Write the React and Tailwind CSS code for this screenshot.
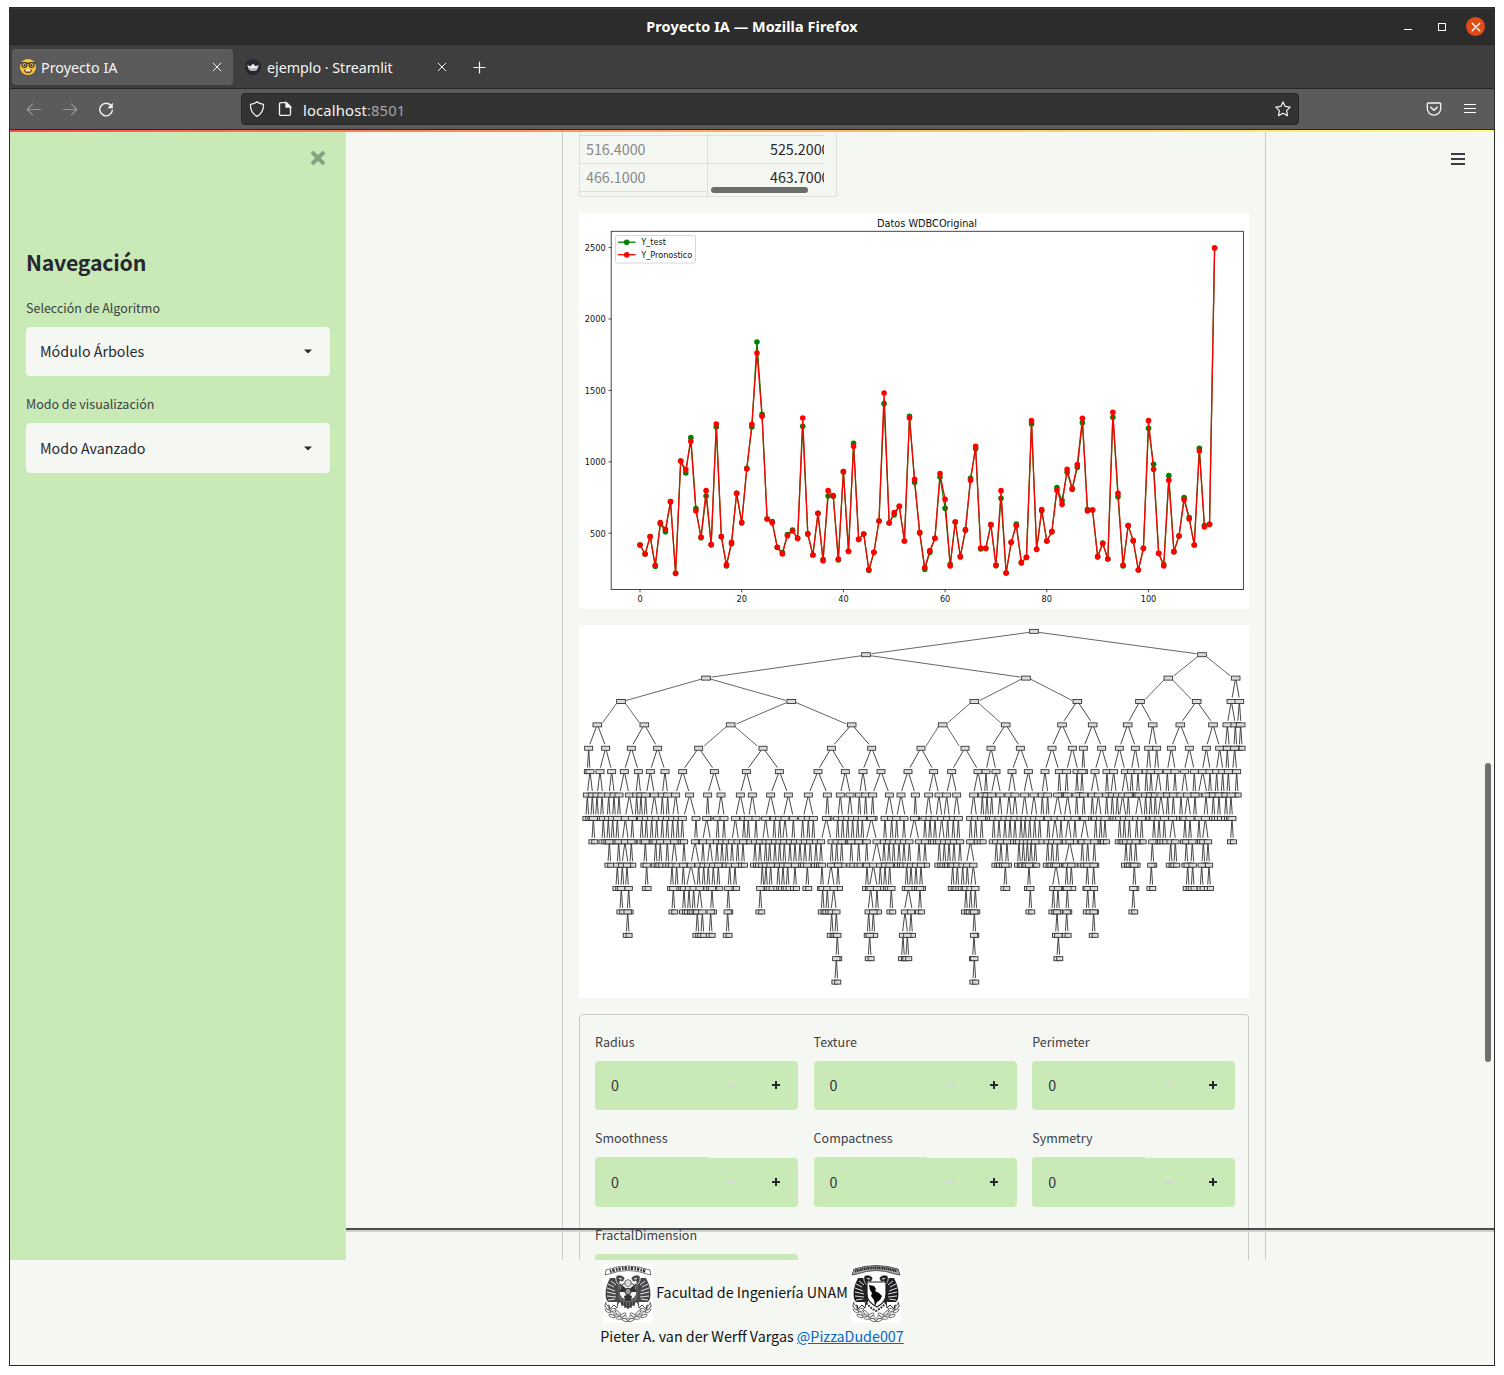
import React from "react";

const SANS = "font-['Noto_Sans_CJK_SC','Open_Sans',sans-serif]";
const CHROME = "font-['Noto_Sans','Open_Sans',sans-serif]";

/* ---------- line chart ---------- */
const predicted = [
  495, 522, 470, 556, 428, 448, 365, 580, 243, 269, 184, 393, 471, 332, 494, 132, 470, 554, 487, 340,
  428, 267, 133, -81, 109, 417, 428, 502, 522, 467, 453, 475, 114, 461, 525, 400, 542, 332, 347, 537,
  275, 514, 199, 478, 462, 569, 517, 423, 39, 429, 398, 379, 483, 114, 298, 458, 563, 512, 475, 281,
  358, 558, 426, 530, 449, 301, 199, 504, 505, 434, 555, 332, 579, 487, 437, 548, 532, 122, 508, 389,
  483, 455, 331, 373, 268, 326, 254, 115, 393, 390, 530, 491, 537, 97, 340, 555, 437, 482, 570, 505,
  122, 268, 520, 558, 301, 515, 468, 359, 417, 495, 213, 441, 433, -396,
];
const testDiffs = {
  3: 559, 4: 431, 5: 455, 9: 279, 10: 173, 11: 386, 12: 473, 13: 348, 15: 141, 17: 558, 18: 491, 22: 141,
  23: -114, 24: 103, 21: 265, 26: 425, 28: 518, 29: 464, 30: 450, 32: 139, 33: 463, 36: 539, 37: 348,
  38: 349, 39: 540, 42: 190, 45: 571, 48: 71, 50: 404, 53: 109, 54: 307, 56: 568, 57: 517, 59: 291,
  60: 385, 61: 553, 64: 451, 65: 295, 66: 206, 67: 507, 70: 557, 71: 355, 74: 432, 77: 132, 79: 392,
  82: 323, 83: 362, 84: 277, 85: 328, 86: 262, 87: 128, 88: 389, 91: 489, 93: 112, 94: 350, 95: 558,
  100: 145, 101: 253, 103: 554, 104: 287, 107: 353, 108: 413, 110: 205, 111: 437,
};
const actual = predicted.map((v, i) => (i in testDiffs ? testDiffs[i] : v));
const px = (i) => 640 + i * 5.085;
const py = (v) => 380 + v / 3;

function Series({ values, color }) {
  return (
    <g>
      <polyline points={values.map((v, i) => `${px(i)},${py(v)}`).join(" ")} fill="none" stroke={color} strokeWidth="1.25" strokeLinejoin="round" />
      {values.map((v, i) => (
        <circle key={i} cx={px(i)} cy={py(v)} r="2.8" fill={color} />
      ))}
    </g>
  );
}

function LineChart() {
  const font = { fontFamily: "DejaVu Sans, sans-serif" };
  return (
    <svg className="block h-[396px] w-[670px] bg-white" viewBox="579 213 670 396" style={font} fill="#111">
      <text x="927" y="226.600" fontSize="9.750" textAnchor="middle">Datos WDBCOriginal</text>
      <Series values={actual} color="#008000" />
      <Series values={predicted} color="#ff0000" />
      <rect x="611.200" y="231.300" width="632.200" height="358.200" fill="none" stroke="#333" strokeWidth="0.9" />
      {[2500, 2000, 1500, 1000, 500].map((t, i) => (
        <g key={t}>
          <path d={`M608.5 ${247.6 + i * 71.4}h2.8`} stroke="#222" strokeWidth="0.8" />
          <text x="605.7" y={250.9 + i * 71.4} fontSize="8.2" textAnchor="end">{t}</text>
        </g>
      ))}
      {[0, 20, 40, 60, 80, 100].map((t) => (
        <g key={t}>
          <path d={`M${px(t)} 589.5v2.8`} stroke="#222" strokeWidth="0.8" />
          <text x={px(t)} y="601.5" fontSize="8.2" textAnchor="middle">{t}</text>
        </g>
      ))}
      <rect x="615.5" y="235.5" width="80" height="27.5" rx="1.5" fill="#fff" fillOpacity="0.8" stroke="#d4d4d4" strokeWidth="0.9" />
      <path d="M618 242.2h17.5" stroke="#008000" strokeWidth="1.3" />
      <circle cx="626.7" cy="242.2" r="2.8" fill="#008000" />
      <path d="M618 254.7h17.5" stroke="#f00" strokeWidth="1.3" />
      <circle cx="626.7" cy="254.7" r="2.8" fill="#f00" />
      <text x="641.3" y="245.1" fontSize="8.1">Y_test</text>
      <text x="641.3" y="257.6" fontSize="8.1">Y_Pronostico</text>
    </svg>
  );
}

/* ---------- decision tree: per level, [x, spread] of each split node ---------- */
const splits = [
  [[1377, 504]],
  [[873, 480], [1881, 101]],
  [[393, 256], [1353, 155], [1780, 85], [1982, 12]],
  [[138, 71], [649, 181], [1198, 95], [1507, 46], [1695, 38], [1865, 49], [1969, 12], [1993, 5]],
  [[67, 26], [208, 39], [467, 96], [830, 60], [1103, 66], [1292, 44], [1461, 31], [1553, 27], [1658, 24], [1733, 12], [1816, 27], [1914, 20], [1957, 6], [1981], [1997]],
  [[41, 4], [92, 18], [169, 21], [248, 22], [371, 48], [564, 50], [769, 41], [890, 27], [1038, 38], [1170, 40], [1248, 15], [1336, 25], [1431, 21], [1492, 17], [1525, 4], [1580, 20], [1633, 17], [1681, 12], [1721, 6], [1745, 6], [1789, 12], [1843, 15], [1894, 12], [1934, 10], [1957], [1979, 6]],
  [[45, 8], [75, 8], [110, 8], [148, 14], [190, 7], [226, 12], [270, 8], [323, 21], [418, 20], [514, 18], [613, 26], [729, 28], [811, 15], [864, 10], [918, 25], [999, 22], [1076, 15], [1130, 15], [1209, 13], [1233], [1263, 14], [1311, 11], [1360, 14], [1410, 9], [1453], [1475], [1506, 4], [1521, 4], [1560, 12], [1596], [1616, 8], [1651, 10], [1670], [1689], [1714], [1728], [1750, 9], [1777], [1800], [1829, 9], [1858], [1883, 13], [1905], [1925], [1943], [1960], [1985]],
  [[37], [52], [66], [81], [101], [117], [132], [163, 12], [185], [198], [212], [238, 10], [262], [278], [302, 9], [344, 18], [398], [438, 10], [496, 14], [532, 11], [587, 15], [640, 15], [700, 15], [757, 5], [796, 7], [825, 7], [853], [872], [893], [943, 12], [978, 13], [1021, 4], [1061, 9], [1092, 9], [1115, 8], [1145, 9], [1196, 9], [1222], [1236], [1250], [1275, 6], [1302, 7], [1320, 7], [1349, 9], [1377, 9], [1402], [1418], [1448, 12], [1478, 10], [1505], [1526], [1552], [1570, 9], [1595], [1612], [1627], [1643, 10], [1660], [1692, 11], [1712], [1727], [1741], [1758, 9], [1778], [1795], [1818], [1838, 9], [1860], [1893, 6], [1915], [1932], [1953], [1968]],
  [[55], [85], [100], [113], [127], [151, 9], [172], [200], [214], [230], [245], [262], [277], [293], [308], [322], [363], [395, 12], [428], [447], [481, 10], [507], [520], [543], [572, 9], [598], [614], [630, 7], [655], [683], [700], [715], [754, 15], [788], [803], [818], [833], [848], [862], [889, 16], [930], [950], [965], [987], [1018, 14], [1050], [1065], [1080], [1100, 8], [1118], [1135], [1150], [1187], [1202], [1220], [1256], [1272], [1290], [1305], [1320], [1338], [1350], [1364], [1379], [1394], [1420], [1440, 9], [1458], [1480, 9], [1500], [1529, 12], [1562], [1577], [1590], [1634], [1648], [1663], [1685], [1700], [1737], [1752], [1768], [1793, 9], [1830], [1845], [1872], [1891, 9], [1971]],
  [[103], [131], [150, 9], [169], [211], [242], [256], [277], [298, 8], [327], [360, 12], [384], [405, 8], [426], [441], [455], [471], [488], [504], [540], [555], [572], [584], [600], [614], [628], [645], [660], [675], [690], [706], [723], [738], [770], [785], [800], [829], [851], [875], [905, 14], [927], [942], [956], [972], [987], [1003], [1032], [1050], [1093], [1108], [1122], [1137], [1155], [1186, 12], [1264], [1278], [1296], [1332], [1345], [1357], [1368], [1381], [1418], [1432], [1447], [1484, 14], [1522], [1538], [1558], [1653], [1667], [1682], [1732], [1787], [1801], [1834], [1852], [1885], [1899]],
  [[127], [142], [156], [215], [291], [305], [325], [348, 14], [371], [386], [400], [415], [430], [464], [480], [562], [573], [587], [610], [624], [638], [660], [697], [741], [768, 10], [789], [876], [895, 12], [916], [930], [944], [995], [1008], [1023], [1038], [1133], [1147], [1163], [1177], [1195, 8], [1291], [1362], [1443, 11], [1475], [1489], [1537], [1556], [1678], [1729], [1838], [1853], [1880], [1902]],
  [[139], [161], [295], [327], [342], [356], [374, 8], [411], [460], [556], [743], [757], [776, 8], [887, 8], [906], [949], [1000, 12], [1035], [1173], [1187], [1201], [1366], [1435], [1449], [1477], [1538], [1557], [1675]],
  [[158], [367], [382], [407], [458], [770], [784], [881], [895], [990, 8], [1008], [1198], [1446], [1475], [1556]],
  [[787], [884], [984], [997], [1197], [1450]],
  [[784], [1198]],
];
const levelY = (l) => 34 + 70.15 * l;

function TreeBox({ x, y, w }) {
  return (
    <g>
      <rect x={x - w / 2} y={y - 6} width={w} height="12" fill="#e2e2e2" stroke="#2c2c2c" strokeWidth="2.6" />
      <path d={`M${x - w / 2 + 4} ${y - 2}h${w - 8}M${x - w / 2 + 4} ${y + 2.5}h${w - 8}`} stroke="#b5b5b5" strokeWidth="1.2" strokeDasharray="2 1.2" />
    </g>
  );
}

function DecisionTree() {
  return (
    <svg className="block h-[373px] w-[670px] bg-white" viewBox="12 15 2010 1119">
      {splits.map((row, l) =>
        row.map(([x, s = 4.3]) =>
          [-1, 1].map((d) => {
            const k = s > 60 ? 15 / s : 0.12;
            return (
              <line key={`${l}-${x}-${d}`} x1={x + d * s * k * 0.9} y1={levelY(l) + (s > 150 ? 3 : 6)} x2={x + d * s * (1 - k * 1.1)} y2={levelY(l + 1) - (s > 150 ? 3 : s > 60 ? 7 : 12)} stroke={s > 60 ? "#555" : "#333"} strokeWidth="2.700" />
            );
          })
        )
      )}
      {splits.map((row, l) =>
        row.flatMap(([x, s = 4.3]) =>
          [-1, 1]
            .map((d) => x + d * s)
            .filter((c) => !(splits[l + 1] || []).some(([p]) => Math.abs(p - c) < 5))
            .map((c) => <TreeBox key={`${l}-${x}-${c}`} x={c} y={levelY(l + 1)} w={18} />)
        )
      )}
      {splits.map((row, l) => row.map(([x]) => <TreeBox key={`${l}-${x}`} x={x} y={levelY(l)} w={l < 5 ? 26 : l < 9 ? 24 : 22} />))}
    </svg>
  );
}

/* ---------- icons ---------- */
function NerdFace() {
  return (
    <svg className="size-4" viewBox="0 0 16 16">
      <circle cx="8" cy="8" r="8" fill="#fcc93b" />
      <path d="M.2 4.2 3 3.6 8 4.4l5-.8 2.8.6" fill="none" stroke="#3c3428" strokeWidth="1.1" />
      <circle cx="4.4" cy="6" r="2.5" fill="#c9b888" stroke="#3c3428" strokeWidth="1.1" />
      <circle cx="11.6" cy="6" r="2.5" fill="#c9b888" stroke="#3c3428" strokeWidth="1.1" />
      <circle cx="4.6" cy="6.2" r="1" fill="#3a2a16" />
      <circle cx="11.4" cy="6.2" r="1" fill="#3a2a16" />
      <path d="M3.6 10.4h8.8c-.4 2.6-2.2 3.9-4.4 3.9s-4-1.300-4.400-3.900z" fill="#7a4a1c" />
      <path d="M5.600 10.400h4.800v2H5.600z" fill="#fff" />
    </svg>
  );
}
function Crown() {
  return (
    <svg className="size-4" viewBox="0 0 16 16">
      <circle cx="8" cy="8" r="8" fill="#262730" />
      <path d="M2.200 6 5.400 7.300 8 4.700l2.600 2.600L13.800 6l-2 5q-3.800 1.400-7.600 0z" fill="#eee" />
      <path d="M3 8q5 2.300 10 0l-1.200 3q-3.800 1.400-7.600 0z" fill="#bbb" />
    </svg>
  );
}
function Stroke({ d, className, width = 1.2 }) {
  return (
    <svg className={className} viewBox="0 0 16 16" fill="none" stroke="currentColor" strokeWidth={width} strokeLinecap="round" strokeLinejoin="round">
      <path d={d} />
    </svg>
  );
}
const CLOSE = "M4.200 4.200l7.600 7.600M11.800 4.200l-7.600 7.600";

function Laurels() {
  return (
    <g fill="#fff" stroke="#555" strokeWidth="0.8">
      <path d="M4 43q8 10 20 9M46 43q-8 10-20 9M10 50q8 6 15 4M40 50q-8 6-15 4" fill="none" />
      {[[4, 43, 60], [5, 47, 30], [10, 46, -20], [9, 52, 20], [15, 49, 40], [16, 54, 5], [20, 51, -30], [22, 56, 20]].map(([x, y, a], i) => (
        <g key={i}>
          <ellipse cx={x} cy={y} rx="3.300" ry="1.300" transform={`rotate(${a} ${x} ${y})`} />
          <ellipse cx={50 - x} cy={y} rx="3.300" ry="1.300" transform={`rotate(${-a} ${50 - x} ${y})`} />
        </g>
      ))}
    </g>
  );
}
function Wing({ dark }) {
  return (
    <g>
      <path d="M7 14Q1 25 3 35l4 6q7 1 10-3l2-14q-2-8-7-10z" fill={dark} />
      <path d="M5 20l6 3M4 24l8 3M4 28l9 2M4 32l9 1M5 36l7-1M8 17l5 4" stroke="#f2f2f2" strokeWidth="0.900" />
      <path d="M13 12q5-3 9 2l-2 4-3-1-1 4q-4-3-3-9z" fill={dark} stroke="#fff" strokeWidth="0.700" />
      <path d="M16 14.500l3 .5" stroke="#fff" strokeWidth="1" />
      <path d="M3 38l-1 5 4-2 1 4 4-4 3 3 1-6" fill="#fff" stroke={dark} strokeWidth="1" />
    </g>
  );
}
function EngineeringCrest() {
  return (
    <svg className="h-[59px] w-[50px] bg-white" viewBox="0 0 50 59">
      <path d="M2 11 3 6Q25-2 47 6l1 5-4-1Q25 3 6 10z" fill="#fff" stroke="#555" strokeWidth="0.800" />
      <path d="M7 7.500Q25 1 43 7.500" fill="none" stroke="#333" strokeWidth="3.200" strokeDasharray="1.500 1 2.400 1.300" />
      <Wing dark="#48484c" />
      <g transform="matrix(-1 0 0 1 50 0)"><Wing dark="#48484c" /></g>
      <path d="M14 21h22l-1 13q-3 7-10 10-7-3-10-10z" fill="#666" stroke="#444" />
      <circle cx="25" cy="27.500" r="9" fill="#f2f2f2" stroke="#444" />
      <circle cx="25" cy="27.500" r="3.200" fill="#999" stroke="#333" />
      <path d="M19 21l4.500 4-1.500 3-6 0zM31 21l-4.500 4 1.500 3 6 0zM21 32l4-1.500 4 1.500-1 4.500h-6z" fill="#333" />
      <path d="M22 17q3-3 6 0v4l-3 2-3-2z" fill="#ddd" stroke="#444" strokeWidth=".7" />
      <path d="M19 37v5M22 38v6M25 38v7M28 38v6M31 37v5" stroke="#333" strokeWidth="1.300" />
      <Laurels />
    </svg>
  );
}
function UnamCrest() {
  return (
    <svg className="h-[59px] w-[50px] bg-white" viewBox="0 0 50 59">
      <path d="M1 11 3 5Q25-2 47 5l2 6-5-1Q25 3 6 10z" fill="#aaa" stroke="#444" strokeWidth="0.900" />
      <path d="M4 7.200Q25 .5 46 7.200" fill="none" stroke="#222" strokeWidth="2.600" strokeDasharray="1 .6 1.500 .6" />
      <Wing dark="#202024" />
      <g transform="matrix(-1 0 0 1 50 0)"><Wing dark="#202024" /></g>
      <path d="M16 18h19v12q0 8-9 13-10-5-10-13z" fill="#fff" stroke="#222" strokeWidth="1.200" />
      <path d="M18 21l5 1 2 3-1 2 4 2 3 3-2 4-3 2-2 4-1-6-3-4 1-3-2-3z" fill="#050505" />
      <path d="M12 34q4 8 13 13 9-5 13-13" fill="none" stroke="#333" strokeWidth="2" strokeDasharray="2 1" />
      <Laurels />
    </svg>
  );
}

/* ---------- page pieces ---------- */
function Select({ label, value, box }) {
  return (
    <div>
      <div className="h-7 text-[12.500px] leading-[18px] text-[#3a4340]">{label}</div>
      <div className={`flex items-center justify-between rounded bg-[#f5f7f2] pl-3.5 pr-[18px] text-[14.300px] text-[#262730] ${box}`}>
        <span className="-mt-px">{value}</span>
        <svg className="h-[5px] w-2" viewBox="0 0 8 5"><path d="M0 .500h8L4.800 3.800q-.8.700-1.600 0z" fill="#262730" /></svg>
      </div>
    </div>
  );
}

function NumberField({ label, raised }) {
  return (
    <div className="h-[96.500px]">
      <div className={`relative h-[30px] text-[12.500px] text-[#3c3d45] ${raised ? "leading-[20px]" : "leading-[22px]"}`}>{label}</div>
      <div className="relative flex h-[49px] items-center rounded bg-[#c9e9b7] px-4 text-[14.300px] text-[#31333f]">
        {raised && <div className="absolute -top-px left-0 h-2 w-[113px] rounded-tl bg-[#c9e9b7]" />}
        <span className={raised ? "grow" : "-mt-0.5 grow"}>0</span>
        <svg className="mb-px mr-9 h-0.5 w-[9px] shrink-0" viewBox="0 0 9 2"><path d="M0 0h9v2H0z" fill="#d6d4e0" /></svg>
        <svg className="mb-px mr-[2.400px] size-2 shrink-0" viewBox="0 0 8 8"><path d="M4 0v8M0 4h8" stroke="#262730" strokeWidth="2" /></svg>
      </div>
    </div>
  );
}

const fields = ["Radius", "Texture", "Perimeter", "Smoothness", "Compactness", "Symmetry", "FractalDimension"];

export default function App() {
  return (
    <div className="h-[1375px] w-[1504px] overflow-hidden bg-white pl-[9px] pt-[7px]">
      <div className="flex h-[1359px] w-[1486px] flex-col border border-[#2d2d2d] bg-[#f5f7f2]">
        {/* title bar */}
        <div className={`grid h-[37px] shrink-0 grid-cols-[1fr_auto_1fr] items-center border-b border-t border-b-[#232323] border-t-[#393939] bg-[#2c2c2c] text-white ${CHROME}`}>
          <span />
          <span className="text-[14.400px] font-bold tracking-[0.09px]">Proyecto IA — Mozilla Firefox</span>
          <div className="flex items-center justify-end pr-[9px]">
            <div className="mr-[26px] mt-[5px] h-px w-2 bg-white" />
            <div className="mr-5 size-2 border border-white" />
            <div className="grid size-[19px] place-items-center rounded-full bg-[#e24a18]"><Stroke d={CLOSE} className="size-4" width={1.4} /></div>
          </div>
        </div>
        {/* tabs */}
        <div className={`flex h-11 shrink-0 items-center border-b border-[#262626] bg-[#3e3e3e] pl-0.5 text-[14.300px] text-[#f4f4f4] ${CHROME}`}>
          <div className="flex h-9 w-[221px] items-center rounded bg-[#5b5b5b] pl-2 pr-2">
            <NerdFace />
            <span className="ml-[5px] grow pt-0.5">Proyecto IA</span>
            <Stroke d={CLOSE} className="size-4" width={1} />
          </div>
          <div className="flex h-9 w-[225px] items-center pl-3 pr-2">
            <Crown />
            <span className="ml-1.5 grow pt-0.5 tracking-[-0.03px]">ejemplo · Streamlit</span>
            <Stroke d={CLOSE} className="size-4" width={1} />
          </div>
          <Stroke d="M8.500 3v11M3 8.500h11" className="ml-[13px] size-4" />
        </div>
        {/* navigation bar */}
        <div className={`flex h-[41px] shrink-0 items-center border-b border-[#262626] bg-[#5b5b5b] text-[#f4f4f4] ${CHROME}`}>
          <Stroke d="M14.500 8.500h-13M6.500 3.200 1.200 8.500l5.300 5.300" className="ml-4 size-4 text-[#989898]" />
          <Stroke d="M1.500 8.500h13M9.500 3.200 14.800 8.500l-5.300 5.300" className="ml-5 size-4 text-[#989898]" />
          <svg className="ml-5 size-4" viewBox="0 0 16 16" fill="none" stroke="currentColor" strokeWidth="1.400">
            <path d="M13.300 5A6.300 6.300 0 1 0 14.400 8.800" />
            <path d="M14.800 1.800v5.500h-5.500z" fill="currentColor" stroke="none" />
          </svg>
          <div className="ml-[127px] flex h-8 w-[1058px] items-center rounded border border-[#242424] bg-[#333] px-[7px]">
            <Stroke d="M8 .8C6.500 2.200 4 3 1.500 3.400 1.300 9 3.500 13 8 15.400c4.500-2.400 6.700-6.400 6.500-12C12 3 9.500 2.200 8 .8z" className="size-4" />
            <svg className="ml-3 size-4" viewBox="0 0 16 16" fill="none" stroke="currentColor" strokeWidth="1.300"><path d="M4 1.600h5.500l4 4v7.300q0 1.500-1.500 1.500H4q-1.500 0-1.500-1.500V3.100Q2.500 1.600 4 1.600z" /><path d="M9 1.600v4.500h4.500z" fill="currentColor" /></svg>
            <span className="ml-[10px] grow pt-0.5 text-[14.800px] tracking-[0.15px]">localhost<span className="text-[#a4a4a4]">:8501</span></span>
            <Stroke d="M8 .9 10.200 5.400 15.200 6.100 11.600 9.600 12.500 14.700 8 12.200 3.500 14.700 4.400 9.600.8 6.100 5.800 5.400z" className="size-4" />
          </div>
          <svg className="ml-[127px] size-4" viewBox="0 0 16 16" fill="none" stroke="currentColor" strokeWidth="1.300" strokeLinecap="round" strokeLinejoin="round">
            <path d="M2.300 2h11.400q1 0 1 1v4.600a6.700 6.500 0 0 1-13.400 0V3q0-1 1-1z" /><path d="M4.800 6.300 8 9.300l3.200-3" strokeWidth="1.500" />
          </svg>
          <div className="-mt-0.5 ml-[22px] flex w-3 flex-col gap-[3px]">
            <div className="h-px bg-white" /><div className="h-px bg-white" /><div className="h-px bg-white" />
          </div>
        </div>
        {/* application */}
        <div className={`relative flex h-[1130px] shrink-0 overflow-hidden ${SANS}`}>
          <aside className="flex w-[336px] shrink-0 flex-col bg-[#c9e9b7] px-4">
            <svg className="ml-auto mr-1 mt-5 size-4 text-[#87a182]" viewBox="0 0 16 16"><path d="M2 2l12 12M14 2 2 14" stroke="currentColor" strokeWidth="4" /></svg>
            <h2 className="mt-[76px] h-[57px] text-[21.300px] font-bold leading-[40px] tracking-[-0.22px] text-[#262730]">Navegación</h2>
            <div className="flex flex-col gap-[19px]">
              <Select label="Selección de Algoritmo" value="Módulo Árboles" box="h-[49px]" />
              <Select label="Modo de visualización" value="Modo Avanzado" box="h-[50px]" />
            </div>
          </aside>
          <div className="absolute left-[336px] right-0 top-[1098px] h-1 border-b-2 border-t-2 border-b-[#cfcfcf] border-t-[#4b4b4b]" />
          <main className="w-[1148px] shrink-0 pl-[216px]">
            <div className="w-[704px] border-x border-[#c9cbc8] px-4">
              <div className="flex h-[67px] w-[258px] overflow-hidden border border-t-0 border-[#dddedd] text-[14.300px]">
                <div className="w-[128px] shrink-0 border-r border-[#dddedd] text-[#85878a]">
                  <div className="h-1.5 border-b border-[#dddedd]" />
                  <div className="h-7 border-b border-[#dddedd] pl-1.5 leading-[26px]">516.4000</div>
                  <div className="h-7 border-b border-[#dddedd] pl-1.5 leading-[26px]">466.1000</div>
                </div>
                <div className="relative h-full w-[116px] overflow-hidden text-[#262730]">
                  <div className="h-1.5 border-b border-[#dddedd]" />
                  <div className="h-7 border-b border-[#dddedd] pl-[62px] leading-[26px]">525.2000</div>
                  <div className="h-7 pl-[62px] leading-[26px]">463.7000</div>
                  <div className="absolute bottom-[3px] left-[3px] h-1.5 w-[97px] rounded-full bg-[#6c6c6c]" />
                </div>
              </div>
              <div className="mt-4 flex flex-col gap-4">
                <LineChart />
                <DecisionTree />
                <div className="grid h-[400px] w-[670px] grid-cols-[203px_203px_203px] content-start gap-x-[15.600px] rounded border border-[#c9cbc8] pl-[15px] pt-4">
                  {fields.map((f, i) => <NumberField key={f} label={f} raised={i > 2 && i < 6} />)}
                </div>
              </div>
            </div>
          </main>
          <div className="absolute inset-x-0 top-0 h-0.5 bg-linear-to-r from-[#ff4b4b] to-[#fffd80]" />
          <div className="absolute right-[3px] top-[633px] h-[299px] w-1.5 rounded-full bg-[#6f6f6f]" />
          <div className="absolute right-[29px] top-[23px] flex w-3.5 flex-col gap-[3px]">
            <div className="h-0.5 bg-[#3b3b44]" /><div className="h-0.5 bg-[#3b3b44]" /><div className="h-0.5 bg-[#3b3b44]" />
          </div>
        </div>
        {/* footer */}
        <footer className={`flex grow flex-col items-center pt-1 text-[14.300px] text-[#111] ${SANS}`}>
          <div className="flex h-[59px] items-center gap-[3px]">
            <EngineeringCrest />
            <span className="-mt-[3px] whitespace-nowrap">Facultad de Ingeniería UNAM</span>
            <UnamCrest />
          </div>
          <div className="leading-[26px]">
            Pieter A. van der Werff Vargas <span className="text-[#0068c9] underline">@PizzaDude007</span>
          </div>
        </footer>
      </div>
    </div>
  );
}
